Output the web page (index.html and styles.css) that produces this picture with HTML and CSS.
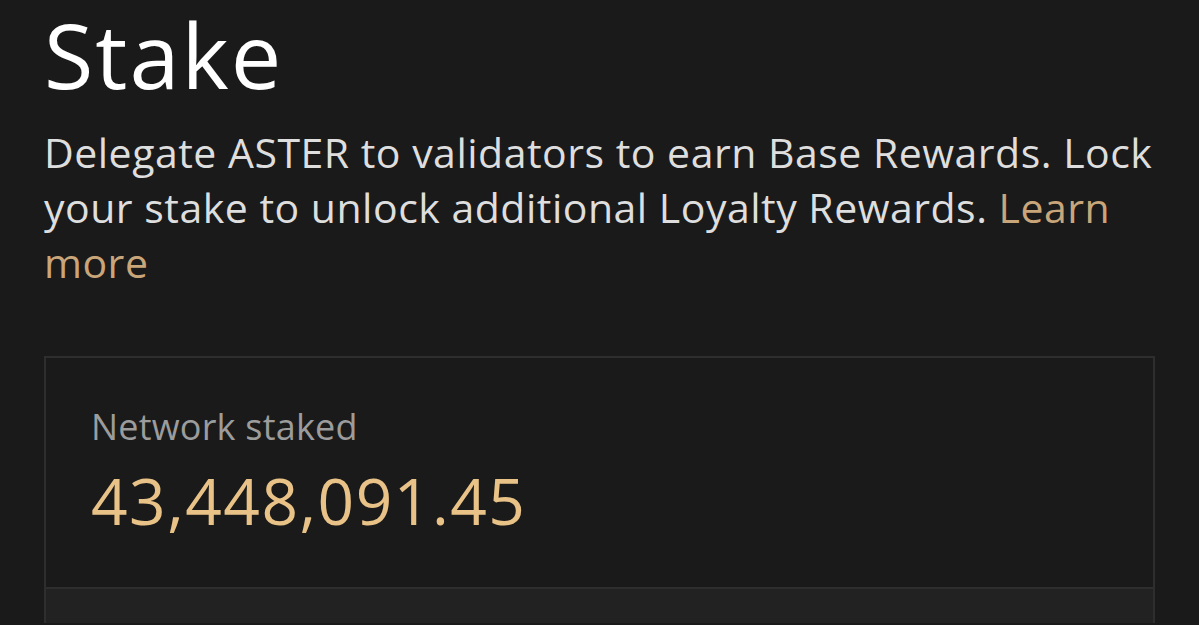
FILE: index.html
```html
<!DOCTYPE html>
<html lang="en">
<head>
  <meta charset="UTF-8" />
  <meta name="viewport" content="width=device-width, initial-scale=1.0" />
  <title>Stake</title>
  <link rel="stylesheet" href="styles.css">
</head>
<body>
<main class="page">
  <h1 class="title">Stake</h1>
  <p class="intro">Delegate ASTER to validators to earn Base Rewards. Lock your stake to unlock additional Loyalty Rewards. <a href="#" class="learn">Learn more</a></p>

  <section class="stat-card">
    <div class="stat-top">
      <div class="stat-label">Network staked</div>
      <div class="stat-value">43,448,091.45</div>
    </div>
    <div class="stat-bottom"></div>
  </section>
</main>
</body>
</html>
```

FILE: styles.css
```css
body {
  margin: 0;
  background: #1a1a1a;
  color: #e6e6e6;
  font-family: "Open Sans", "Noto Sans", sans-serif;
}
.page {
  padding: 0 44px;
}
.title {
  margin: 0;
  padding-top: 2px;
  font-size: 90px;
  line-height: 104px;
  font-weight: 500;
  color: #ffffff;
  letter-spacing: 2px;
}
.intro {
  margin: 19px 0 0 0;
  font-size: 41px;
  line-height: 55px;
  color: #dedede;
  letter-spacing: 0.5px;
}
.learn {
  color: #c9a67a;
  text-decoration: none;
}
.stat-card {
  margin-top: 66px;
  border: 2px solid #2e2e2e;
  border-bottom: none;
}
.stat-top {
  padding: 47px 45px 50px;
  border-bottom: 2px solid #2e2e2e;
}
.stat-label {
  font-size: 36px;
  line-height: 44px;
  color: #9c9c9c;
  letter-spacing: 0.2px;
}
.stat-value {
  margin-top: 16px;
  font-size: 64px;
  line-height: 72px;
  color: #e8c287;
  letter-spacing: 1.5px;
}
.stat-bottom {
  height: 34px;
  background: #222222;
}
```
